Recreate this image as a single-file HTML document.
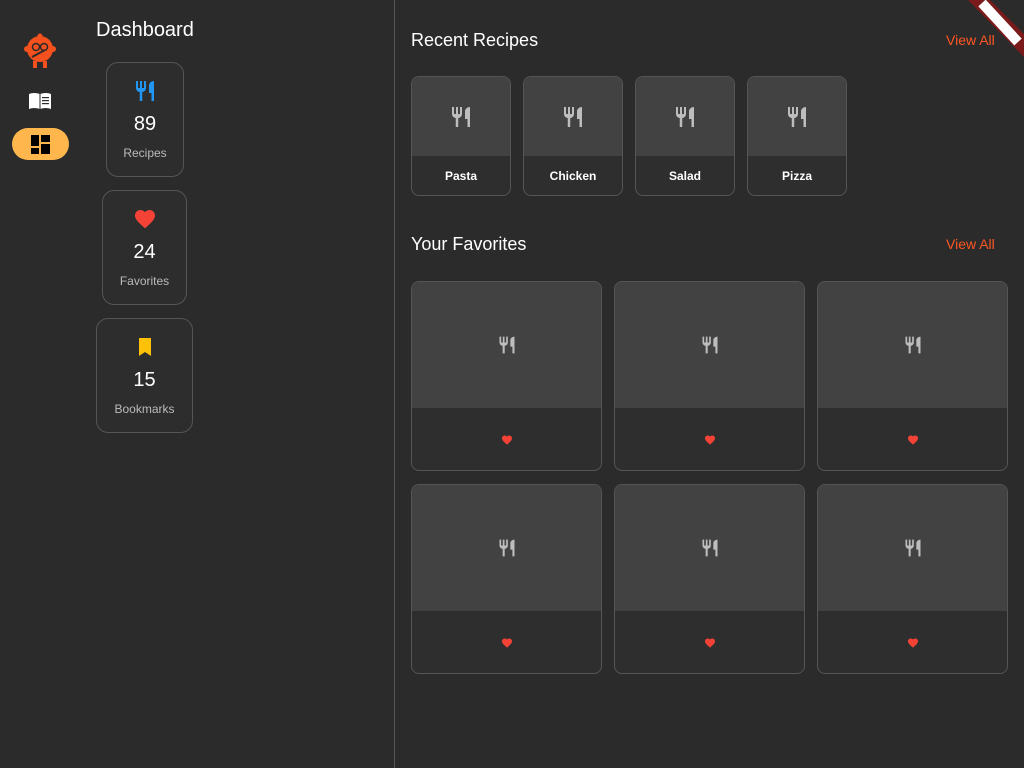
<!DOCTYPE html><html><head><style>
*{margin:0;padding:0;box-sizing:border-box}
body{width:1024px;height:768px;background:#2b2b2b;font-family:"Liberation Sans",sans-serif;position:relative;overflow:hidden;color:#fff}
.abs{position:absolute}
.stat{position:absolute;border:1px solid #555;border-radius:12px;text-align:center;background:#2d2d2d}
.stat svg{display:block;margin:16px auto 0}
.stat .n{font-size:20px;margin-top:10px;font-weight:500}
.stat .l{font-size:12px;color:#bbb;margin-top:10px}
.rc{position:absolute;top:76px;width:100px;height:120px;border:1px solid #555;border-radius:8px;overflow:hidden;background:#2e2e2e}
.rc .t{height:79px;background:#424242;display:flex;align-items:center;justify-content:center}
.rc .b{text-align:center;font-size:12px;font-weight:bold;padding-top:13px}
.fc{position:absolute;width:191px;height:190px;border:1px solid #555;border-radius:8px;overflow:hidden;background:#2e2e2e}
.fc .t{height:126px;background:#424242;display:flex;align-items:center;justify-content:center}
.fc .b{height:63px;display:flex;align-items:center;justify-content:center}
h2{position:absolute;font-size:18px;font-weight:normal}
.va{position:absolute;color:#ff5722;font-size:14px}
</style></head><body>
<svg class="abs" style="left:23px;top:33px" width="34" height="36" viewBox="0 0 34 36"><circle cx="17" cy="16" r="13" fill="#f4511e"/><circle cx="4" cy="16" r="3" fill="#f4511e"/><circle cx="30" cy="16" r="3" fill="#f4511e"/><circle cx="13" cy="14" r="3.5" fill="none" stroke="#2b2b2b" stroke-width="1.5"/><circle cx="21" cy="14" r="3.5" fill="none" stroke="#2b2b2b" stroke-width="1.5"/><path d="M9 24 L22 17" stroke="#2b2b2b" stroke-width="2"/><rect x="10" y="28" width="4" height="7" fill="#f4511e"/><rect x="20" y="28" width="4" height="7" fill="#f4511e"/><circle cx="17" cy="3" r="2.5" fill="#f4511e"/></svg>
<svg class="abs" style="left:28px;top:91px" width="24" height="20" viewBox="0 0 24 20"><path d="M1 3 Q6 1 12 3 Q18 1 23 3 V18 Q18 16 12 18 Q6 16 1 18Z" fill="#fff"/><path d="M12 3V18" stroke="#2b2b2b" stroke-width="1"/><rect x="14" y="6" width="7" height="1.2" fill="#2b2b2b"/><rect x="14" y="9" width="7" height="1.2" fill="#2b2b2b"/><rect x="14" y="12" width="7" height="1.2" fill="#2b2b2b"/></svg>
<div class="abs" style="left:12px;top:128px;width:57px;height:32px;border-radius:16px;background:#ffb74d"></div>
<svg class="abs" style="left:31px;top:135px" width="19" height="19" viewBox="0 0 19 19"><rect x="0" y="0" width="8" height="11" fill="#000"/><rect x="10" y="0" width="9" height="7" fill="#000"/><rect x="0" y="13" width="8" height="6" fill="#000"/><rect x="10" y="9" width="9" height="10" fill="#000"/></svg>
<div class="abs" style="left:96px;top:19px;font-size:20px">Dashboard</div>
<div class="stat" style="left:106px;top:62px;width:78px;height:115px"><svg width="24" height="24" viewBox="0 0 24 24"><path fill="#2196f3" d="M11 9H9V2H7v7H5V2H3v7c0 2.12 1.66 3.84 3.75 3.97V22h2.5v-9.03C11.34 12.84 13 11.12 13 9V2h-2v7zm5-3v8h2.5v8H21V2c-2.76 0-5 2.24-5 4z"/></svg><div class="n">89</div><div class="l">Recipes</div></div>
<div class="stat" style="left:102px;top:190px;width:85px;height:115px"><svg width="24" height="24" viewBox="0 0 24 24"><path fill="#f44336" d="M12 21.35l-1.45-1.32C5.4 15.36 2 12.28 2 8.5 2 5.42 4.42 3 7.5 3c1.74 0 3.41.81 4.5 2.09C13.09 3.81 14.76 3 16.5 3 19.58 3 22 5.42 22 8.5c0 3.78-3.4 6.86-8.55 11.54L12 21.35z"/></svg><div class="n">24</div><div class="l">Favorites</div></div>
<div class="stat" style="left:96px;top:318px;width:97px;height:115px"><svg width="24" height="24" viewBox="0 0 24 24"><path fill="#ffc107" d="M6 3h12v18l-6-4-6 4z"/></svg><div class="n">15</div><div class="l">Bookmarks</div></div>
<div class="abs" style="left:394px;top:0;width:1px;height:768px;background:#555"></div>
<h2 style="left:411px;top:30px">Recent Recipes</h2><div class="va" style="left:946px;top:32px">View All</div>
<h2 style="left:411px;top:234px">Your Favorites</h2><div class="va" style="left:946px;top:236px">View All</div>
<div class="rc" style="left:411px"><div class="t"><svg width="24" height="24" viewBox="0 0 24 24"><path fill="#bdbdbd" d="M11 9H9V2H7v7H5V2H3v7c0 2.12 1.66 3.84 3.75 3.97V22h2.5v-9.03C11.34 12.84 13 11.12 13 9V2h-2v7zm5-3v8h2.5v8H21V2c-2.76 0-5 2.24-5 4z"/></svg></div><div class="b">Pasta</div></div>
<div class="rc" style="left:523px"><div class="t"><svg width="24" height="24" viewBox="0 0 24 24"><path fill="#bdbdbd" d="M11 9H9V2H7v7H5V2H3v7c0 2.12 1.66 3.84 3.75 3.97V22h2.5v-9.03C11.34 12.84 13 11.12 13 9V2h-2v7zm5-3v8h2.5v8H21V2c-2.76 0-5 2.24-5 4z"/></svg></div><div class="b">Chicken</div></div>
<div class="rc" style="left:635px"><div class="t"><svg width="24" height="24" viewBox="0 0 24 24"><path fill="#bdbdbd" d="M11 9H9V2H7v7H5V2H3v7c0 2.12 1.66 3.84 3.75 3.97V22h2.5v-9.03C11.34 12.84 13 11.12 13 9V2h-2v7zm5-3v8h2.5v8H21V2c-2.76 0-5 2.24-5 4z"/></svg></div><div class="b">Salad</div></div>
<div class="rc" style="left:747px"><div class="t"><svg width="24" height="24" viewBox="0 0 24 24"><path fill="#bdbdbd" d="M11 9H9V2H7v7H5V2H3v7c0 2.12 1.66 3.84 3.75 3.97V22h2.5v-9.03C11.34 12.84 13 11.12 13 9V2h-2v7zm5-3v8h2.5v8H21V2c-2.76 0-5 2.24-5 4z"/></svg></div><div class="b">Pizza</div></div>
<div id="favs"></div>
<script>
var f='<div class="t"><svg width="20" height="20" viewBox="0 0 24 24"><path fill="#bdbdbd" d="M11 9H9V2H7v7H5V2H3v7c0 2.12 1.66 3.84 3.75 3.97V22h2.5v-9.03C11.34 12.84 13 11.12 13 9V2h-2v7zm5-3v8h2.5v8H21V2c-2.76 0-5 2.24-5 4z"/></svg></div><div class="b"><svg width="12" height="12" viewBox="0 0 24 24"><path fill="#f44336" d="M12 21.35l-1.45-1.32C5.4 15.36 2 12.28 2 8.5 2 5.42 4.42 3 7.5 3c1.74 0 3.41.81 4.5 2.09C13.09 3.81 14.76 3 16.5 3 19.58 3 22 5.42 22 8.5c0 3.78-3.4 6.86-8.55 11.54L12 21.35z"/></svg></div>';
var h='';[281,484].forEach(function(y){[411,614,817].forEach(function(x){h+='<div class="fc" style="left:'+x+'px;top:'+y+'px">'+f+'</div>'})});
document.getElementById('favs').innerHTML=h;
</script>
<svg class="abs" style="left:0;top:0" width="1024" height="768" viewBox="0 0 1024 768"><polygon points="968,0 990,0 1024,34 1024,57" fill="#7b1a1a"/><line x1="982" y1="3" x2="1018" y2="42" stroke="#fff" stroke-width="10"/></svg>
</body></html>
